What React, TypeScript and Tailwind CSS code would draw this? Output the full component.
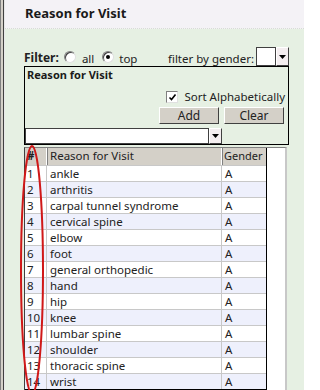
import React from 'react';

const reasons = [
  'ankle',
  'arthritis',
  'carpal tunnel syndrome',
  'cervical spine',
  'elbow',
  'foot',
  'general orthopedic',
  'hand',
  'hip',
  'knee',
  'lumbar spine',
  'shoulder',
  'thoracic spine',
  'wrist',
];

const font = "font-['Noto_Sans','DejaVu_Sans',sans-serif]";

// small arrow button used by the two combo boxes
const DropArrow: React.FC<{ className?: string }> = ({ className }) => (
  <div
    className={`flex items-center justify-center bg-[#f4eef0] border-t border-l border-t-white border-l-white border-r border-b border-r-[#404040] border-b-[#404040] ${className ?? ''}`}
  >
    <svg width="7" height="4" viewBox="0 0 7 4">
      <path d="M0 0h7L3.5 4z" fill="#000" />
    </svg>
  </div>
);

const Radio: React.FC<{ checked?: boolean }> = ({ checked }) => (
  <span className="inline-flex w-[12px] h-[12px] rounded-full bg-white border border-t-[#808080] border-l-[#808080] border-r-[#e0e0e0] border-b-[#e0e0e0] items-center justify-center shadow-[inset_1px_1px_0_#404040]">
    {checked && <span className="w-[4px] h-[4px] rounded-full bg-black" />}
  </span>
);

const Button: React.FC<{ label: string }> = ({ label }) => (
  <div className="w-[60px] h-[17px] flex items-center justify-center bg-[#d4d0c8] border border-t-white border-l-white border-r-[#404040] border-b-[#404040] text-[12px] text-[#222] leading-none">
    {label}
  </div>
);

const App: React.FC = () => {
  return (
    <div className={`relative w-[304px] h-[390px] overflow-hidden flex bg-[#e6f0e3] ${font}`}>
      {/* window edge */}
      <div className="w-[5px] h-full flex">
        <div className="w-[1px] bg-[#808080]" />
        <div className="w-[2px] bg-[#d4d0c8]" />
        <div className="w-[1px] bg-[#404040]" />
        <div className="w-[1px] bg-[#e8e8e8]" />
      </div>

      <div className="flex-1 flex flex-col min-w-0">
        {/* title band */}
        <div className="h-[29px] bg-[#f4f2f6] border-b border-dotted border-[#d8dcd6] flex items-center pl-[20px] text-[13px] font-bold text-[#1a1a1a]">
          Reason for Visit
        </div>

        <div className="flex-1 pl-[19px] pr-[15px] pt-[18px] flex flex-col">
          {/* filter row */}
          <div className="h-[19px] flex items-end text-[11.5px] text-[#222] leading-none">
            <span className="font-bold text-[12px] mb-[2px]">Filter:</span>
            <span className="ml-[5px] mb-[3px] flex items-center">
              <Radio />
            </span>
            <span className="ml-[6px] mb-[2px]">all</span>
            <span className="ml-[8px] mb-[3px] flex items-center">
              <Radio checked />
            </span>
            <span className="ml-[5px] mb-[2px]">top</span>
            <span className="ml-auto mb-[2px] mr-[2px]">filter by gender:</span>
            <div className="flex h-[19px]">
              <div className="w-[20px] h-full bg-white border border-[#404040]" />
              <DropArrow className="w-[13px] h-full" />
            </div>
          </div>

          {/* reason box */}
          <div className="h-[79px] border border-black flex flex-col">
            <div className="pl-[2px] pt-[1px] text-[11px] font-bold text-[#1a1a1a] leading-[14px]">
              Reason for Visit
            </div>
            <div className="mt-[9px] flex items-center justify-end pr-[3px] text-[11.5px] text-[#222] leading-none">
              <span className="w-[12px] h-[12px] bg-white border border-t-[#808080] border-l-[#808080] border-r-[#e0e0e0] border-b-[#e0e0e0] flex items-center justify-center">
                <svg width="9" height="9" viewBox="0 0 9 9">
                  <path d="M1.5 4.5l2 2 4-5" stroke="#000" strokeWidth="1.6" fill="none" />
                </svg>
              </span>
              <span className="ml-[6px]">Sort Alphabetically</span>
            </div>
            <div className="mt-[4px] flex justify-end gap-[5px] pr-[4px]">
              <Button label="Add" />
              <Button label="Clear" />
            </div>
            <div className="mt-[4px] flex h-[17px] w-[197px]">
              <div className="flex-1 bg-white border border-[#404040]" />
              <DropArrow className="w-[13px] h-full" />
            </div>
          </div>

          {/* grid */}
          <div className="mt-[2px] w-[263px] flex-1 bg-white border-l border-l-[#404040] border-t border-t-[#808080] border-r-2 border-r-[#c8c8c8] flex">
            <div className="w-[242px] border-r border-b border-black text-[11.5px] text-[#222] self-start">
              <div className="flex h-[17px] bg-[#d4d0c8] leading-[16px]">
                <div className="w-[22px] pl-[2px] font-bold border-r border-white shadow-[1px_0_0_#808080]">#</div>
                <div className="w-[175px] pl-[3px] border-r border-white shadow-[1px_0_0_#808080]">Reason for Visit</div>
                <div className="flex-1 pl-[2px] whitespace-nowrap overflow-hidden text-[11px]">Gender</div>
              </div>
              {reasons.map((r, i) => (
                <div
                  key={r}
                  className={`flex h-[16px] leading-[15px] border-t border-[#c8c8c8] ${i % 2 === 1 ? 'bg-[#eef0fc]' : 'bg-white'}`}
                >
                  <div className="w-[22px] pl-[2px] border-r border-[#c8c8c8]">{i + 1}</div>
                  <div className="w-[175px] pl-[3px] border-r border-[#c8c8c8]">{r}</div>
                  <div className="flex-1 pl-[3px]">A</div>
                </div>
              ))}
            </div>
          </div>
        </div>
      </div>

      {/* red annotation around the # column */}
      <svg className="absolute left-0 top-0 pointer-events-none" width="304" height="390">
        <ellipse cx="32" cy="270" rx="11" ry="124" fill="none" stroke="#d01818" strokeWidth="2" />
      </svg>
    </div>
  );
};

export default App;
